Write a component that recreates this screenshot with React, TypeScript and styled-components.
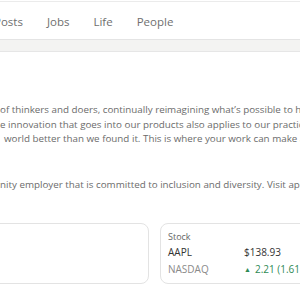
import styled, { createGlobalStyle } from 'styled-components'

const GlobalStyle = createGlobalStyle`
  html, body {
    margin: 0;
    padding: 0;
    background: #ffffff;
  }
  body {
    font-family: "Open Sans", "Noto Sans", sans-serif;
    overflow: hidden;
  }
  * {
    box-sizing: border-box;
  }
`

const Page = styled.div`
  width: 300px;
  height: 300px;
  overflow: hidden;
  background: #ffffff;
`

const TopLine = styled.div`
  height: 1px;
  margin-top: 1px;
  background: #ebebeb;
`

const NavBar = styled.nav`
  height: 38px;
  display: flex;
  align-items: center;
  gap: 24px;
  margin-left: -6px;
  border-bottom: 1px solid #e4e4e4;
`

const NavItem = styled.span`
  font-size: 11.5px;
  color: #6f6f6f;
  white-space: nowrap;
  padding-top: 2px;
`

const Band = styled.div`
  height: 12px;
  background: #f3f3f2;
  border-bottom: 1px solid #e6e6e6;
`

const Content = styled.section`
  padding-top: 51px;
`

const Paragraph = styled.div<{ $gap?: number }>`
  font-size: 9.8px;
  line-height: 14.5px;
  color: #6b6b6b;
  margin-top: ${(p) => p.$gap ?? 0}px;
`

const Line = styled.div<{ $indent?: number }>`
  white-space: nowrap;
  padding-left: ${(p) => p.$indent ?? 0}px;
`

const Cards = styled.div`
  display: grid;
  grid-template-columns: 160px 160px;
  gap: 11px;
  margin-left: -11px;
  margin-top: 31px;
`

const Card = styled.div`
  height: 61px;
  border: 1px solid #e3e3e3;
  border-radius: 8px;
  padding: 6px 7px;
`

const CardLabel = styled.div`
  font-size: 9px;
  color: #666666;
  line-height: 13px;
`

const StockGrid = styled.div`
  display: grid;
  grid-template-columns: 76px auto;
  row-gap: 3px;
  margin-top: 2px;
  font-size: 10px;
  line-height: 14px;
  white-space: nowrap;
`

const Cell = styled.span<{ $tone: 'dark' | 'muted' | 'up' }>`
  color: ${(p) => (p.$tone === 'dark' ? '#333333' : p.$tone === 'up' ? '#2f8a55' : '#8a8a8a')};
`

const Arrow = styled.span`
  font-size: 7px;
  margin-right: 4px;
  vertical-align: 1px;
`

export default function App() {
  return (
    <Page>
      <GlobalStyle />
      <TopLine />
      <NavBar>
        <NavItem>Posts</NavItem>
        <NavItem>Jobs</NavItem>
        <NavItem>Life</NavItem>
        <NavItem>People</NavItem>
      </NavBar>
      <Band />
      <Content>
        <Paragraph>
          <Line>of thinkers and doers, continually reimagining what’s possible to help us all</Line>
          <Line>e innovation that goes into our products also applies to our practices</Line>
          <Line $indent={4}>world better than we found it. This is where your work can make a difference</Line>
        </Paragraph>
        <Paragraph $gap={31}>
          <Line>nity employer that is committed to inclusion and diversity. Visit apple.com</Line>
        </Paragraph>
        <Cards>
          <Card />
          <Card>
            <CardLabel>Stock</CardLabel>
            <StockGrid>
              <Cell $tone="dark">AAPL</Cell>
              <Cell $tone="dark">$138.93</Cell>
              <Cell $tone="muted">NASDAQ</Cell>
              <Cell $tone="up"><Arrow>▲</Arrow>2.21 (1.616%)</Cell>
            </StockGrid>
          </Card>
        </Cards>
      </Content>
    </Page>
  )
}
